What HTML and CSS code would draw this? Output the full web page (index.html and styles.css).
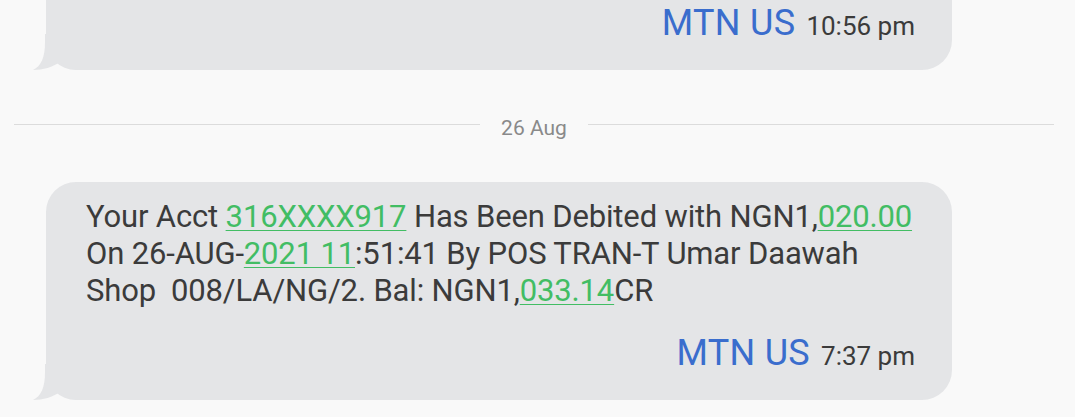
FILE: index.html
```html
<!DOCTYPE html>
<html lang="en">
<head>
    <meta charset="UTF-8">
    <meta name="viewport" content="width=device-width, initial-scale=1.0">
    <title>Messages - MTN US</title>
    <link rel="stylesheet" href="styles.css">
</head>
<body>
    <div class="thread">
        <div class="bubble bubble-first">
            <svg class="tail" width="50" height="36" viewBox="0 0 50 36">
                <path d="M12 0 L12 8 C12 24 8 32 0 36 C10 36 20 33 27 28 C33 33 40 36 47 36 L50 36 L50 0 Z"/>
            </svg>
            <div class="meta">
                <span class="sender">MTN US</span>
                <span class="time">10:56 pm</span>
            </div>
        </div>

        <div class="date-divider">
            <span>26 Aug</span>
        </div>

        <div class="bubble">
            <svg class="tail" width="50" height="36" viewBox="0 0 50 36">
                <path d="M12 0 L12 8 C12 24 8 32 0 36 C10 36 20 33 27 28 C33 33 40 36 47 36 L50 36 L50 0 Z"/>
            </svg>
            <div class="text">Your Acct <a class="link">316XXXX917</a> Has Been Debited with NGN1,<a class="link">020.00</a><br>On 26-AUG-<a class="link">2021 11</a>:51:41 By POS TRAN-T Umar Daawah<br>Shop &nbsp;008/LA/NG/2. Bal: NGN1,<a class="link">033.14</a>CR</div>
            <div class="meta">
                <span class="sender">MTN US</span>
                <span class="time">7:37 pm</span>
            </div>
        </div>
    </div>
</body>
</html>
```

FILE: styles.css
```css
body {
    margin: 0;
    background-color: #f9f9f9;
    font-family: Roboto, "Liberation Sans", sans-serif;
    overflow: hidden;
}
.thread {
    padding: 0 0 0 46px;
}
.bubble {
    position: relative;
    width: 906px;
    box-sizing: border-box;
    background-color: #e4e5e7;
    border-radius: 30px;
    padding: 16px 37px 26px 40px;
}
.bubble-first {
    margin-top: -40px;
    padding-top: 42px;
}
.tail {
    position: absolute;
    left: -13px;
    bottom: 0;
    fill: #e4e5e7;
}
.text {
    font-size: 31px;
    line-height: 37px;
    letter-spacing: -0.15px;
    white-space: nowrap;
    color: #3b3b3b;
}
.link {
    color: #42bd64;
    text-decoration: underline;
    text-decoration-thickness: 1px;
    text-underline-offset: 3px;
}
.meta {
    display: flex;
    justify-content: flex-end;
    align-items: baseline;
    gap: 11px;
    margin-top: 23px;
}
.bubble-first .meta {
    margin-top: 0;
}
.sender {
    font-size: 36px;
    letter-spacing: 0.3px;
    color: #3a6dcd;
}
.time {
    font-size: 26px;
    color: #3b3b3b;
}
.date-divider {
    display: flex;
    align-items: flex-start;
    gap: 21px;
    margin: 46px 21px 42px -32px;
    color: #8a8a8a;
    font-size: 21px;
}
.date-divider::before,
.date-divider::after {
    content: "";
    flex: 1;
    height: 1px;
    margin-top: 8px;
    background-color: #dcdcdc;
}
```
